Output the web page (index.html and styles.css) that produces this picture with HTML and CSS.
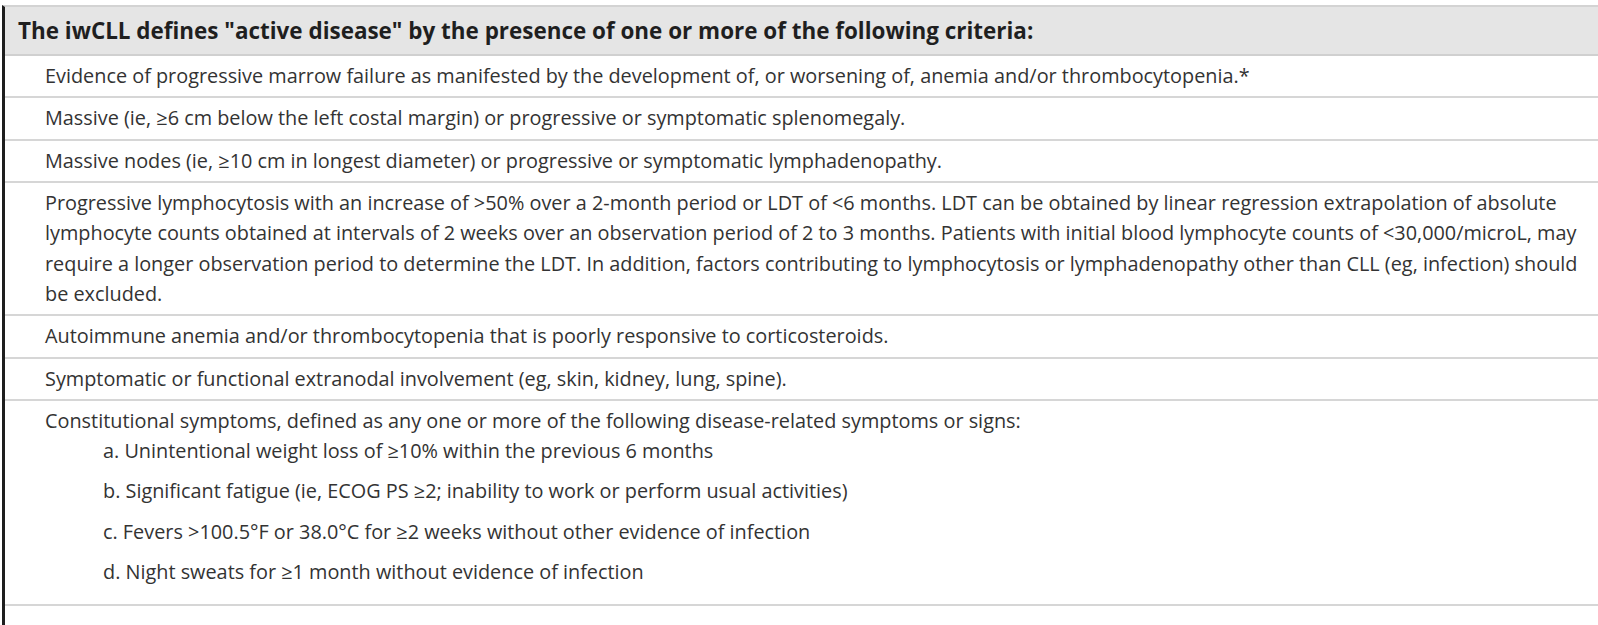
FILE: index.html
```html
<!DOCTYPE html>
<html>
<head>
<meta charset="utf-8">
<link rel="stylesheet" href="styles.css">
</head>
<body>
<div class="table">
  <div class="head">The iwCLL defines "active disease" by the presence of one or more of the following criteria:</div>
  <div class="row">Evidence of progressive marrow failure as manifested by the development of, or worsening of, anemia and/or thrombocytopenia.*</div>
  <div class="row">Massive (ie, ≥6 cm below the left costal margin) or progressive or symptomatic splenomegaly.</div>
  <div class="row">Massive nodes (ie, ≥10 cm in longest diameter) or progressive or symptomatic lymphadenopathy.</div>
  <div class="row">Progressive lymphocytosis with an increase of &gt;50% over a 2-month period or LDT of &lt;6 months. LDT can be obtained by linear regression extrapolation of absolute lymphocyte counts obtained at intervals of 2 weeks over an observation period of 2 to 3 months. Patients with initial blood lymphocyte counts of &lt;30,000/microL, may require a longer observation period to determine the LDT. In addition, factors contributing to lymphocytosis or lymphadenopathy other than CLL (eg, infection) should be excluded.</div>
  <div class="row">Autoimmune anemia and/or thrombocytopenia that is poorly responsive to corticosteroids.</div>
  <div class="row">Symptomatic or functional extranodal involvement (eg, skin, kidney, lung, spine).</div>
  <div class="row last">
    <div>Constitutional symptoms, defined as any one or more of the following disease-related symptoms or signs:</div>
    <div class="sub">a. Unintentional weight loss of ≥10% within the previous 6 months</div>
    <div class="sub">b. Significant fatigue (ie, ECOG PS ≥2; inability to work or perform usual activities)</div>
    <div class="sub">c. Fevers &gt;100.5°F or 38.0°C for ≥2 weeks without other evidence of infection</div>
    <div class="sub">d. Night sweats for ≥1 month without evidence of infection</div>
  </div>
</div>
</body>
</html>
```
FILE: styles.css
```css
html, body {
  margin: 0;
  padding: 0;
  background: #ffffff;
}
body {
  font-family: "Open Sans", "Noto Sans", sans-serif;
  color: #333333;
  height: 625px;
  overflow: hidden;
}
.table {
  margin: 5px 0 0 2px;
  border-top: 2px solid #d3d3d3;
  border-left: 3px solid #1e1e1e;
  min-height: 640px;
}
.head {
  background: #e5e5e5;
  height: 47px;
  line-height: 47px;
  padding-left: 13px;
  font-weight: 700;
  font-size: 22.45px;
  color: #1f1f1f;
  border-bottom: 2px solid #d0d0d0;
  white-space: nowrap;
}
.row {
  font-size: 19.85px;
  line-height: 30.2px;
  padding: 5.1px 8px 5.1px 40px;
  border-bottom: 2px solid #d6d6d6;
}
.row.last {
  padding-bottom: 7px;
}
.sub {
  padding-left: 58px;
  margin-bottom: 10px;
}
```
